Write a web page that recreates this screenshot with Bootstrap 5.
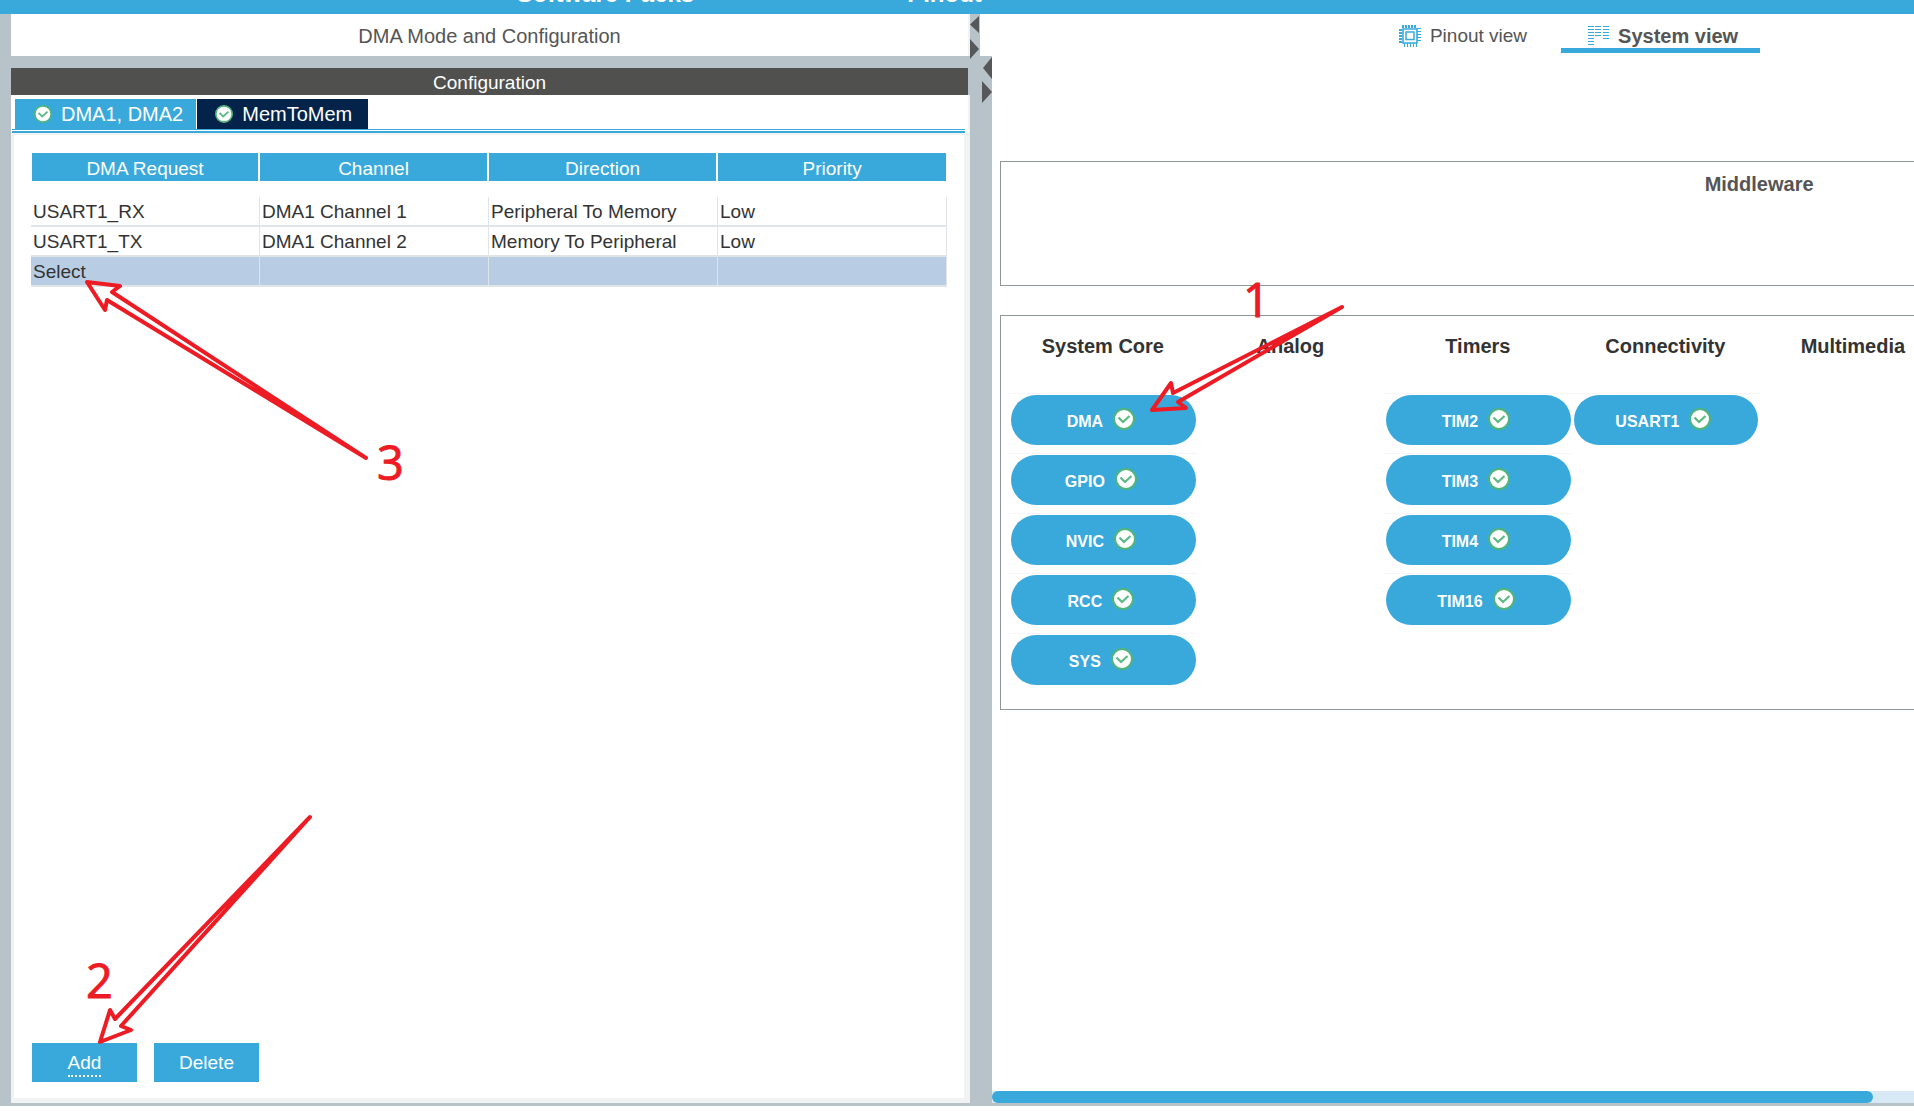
<!DOCTYPE html>
<html lang="en">
<head>
<meta charset="utf-8">
<meta name="viewport" content="width=device-width, initial-scale=1">
<title>DMA Mode and Configuration</title>
<link href="https://cdn.jsdelivr.net/npm/bootstrap@5.3.0/dist/css/bootstrap.min.css" rel="stylesheet">
<style>
  :root { --blue: #39a9dc; --frame: #b7c3c9; --navy: #03234b; --dark: #50514f; --edge: #f1f2f2; --line: #e1e4e6; }
  body { font-family: "Liberation Sans", Arial, sans-serif; font-size: 19px; line-height: 24px; color: #333; background: #fff; }
  a { color: inherit; text-decoration: none; }
  .app { height: 100vh; min-height: 800px; padding-bottom: 11px; }
  .menu-strip { height: 14px; background: var(--blue); padding: 0 0 8px 27%; gap: 213px; font-size: 24px; }
  .head-row { height: 42px; background: var(--frame); padding-left: 11px; }
  .left-side { flex: 0 0 50.4%; min-width: 0; }
  .mode-title { border-right: 2px solid var(--edge); color: #555; font-size: 20px; line-height: 44px; }
  .grip-a { flex: 0 0 10px; }
  .grip-b { flex: 0 0 22px; }
  .grip-a svg, .grip-b svg { display: block; overflow: visible; fill: #555759; margin-left: auto; }
  .grip-a, .grip-b { position: relative; z-index: 1; }
  .views { padding-left: 238px; gap: 12px; color: #555; }
  .view-tab { height: 39px; padding: 9px 22px 0 27px; gap: 9px; border-bottom: 5px solid transparent; }
  .view-tab.on { border-color: var(--blue); font-weight: 700; font-size: 20px; }
  .main-row { background: var(--frame); padding: 0 0 3px 11px; }
  .config { margin-top: 12px; }
  .config-bar { background: var(--dark); color: #fff; height: 27px; line-height: 29px; margin-right: 2px; }
  .tab-strip { background: #fff; padding: 4px 0 0 4px; gap: 1px; border-right: 2px solid var(--edge); }
  .cfg-tab { border: 0; height: 30px; color: #fff; background: var(--blue); font-size: 20px; gap: 9px; padding: 0 13px 0 19px; }
  .cfg-tab.alt { background: var(--navy); padding: 0 16px 0 18px; }
  .rules { background: #fff; padding: 0 4px 0 1px; border-right: 1px solid var(--edge); }
  .rules div { height: 4px; border-top: 1px solid var(--blue); border-bottom: 2px solid var(--blue); }
  .sheet { background: #fff; border: solid var(--edge); border-width: 2px 6px 5px 3px; padding: 18px 17px 16px; }
  .dma-grid { table-layout: fixed; width: 100%; border-collapse: separate; border-spacing: 0; }
  .dma-grid th { background: var(--blue); color: #fff; font-weight: 400; text-align: center; height: 28px; border-right: 2px solid #fff; padding: 3px 0 0; }
  .dma-grid th:first-child { border-left: 1px solid #fff; }
  .dma-grid th:last-child { border-right-width: 1px; }
  .dma-grid .spacer td { height: 16px; padding: 0; border: 0; }
  .dma-grid td { height: 30px; padding: 1px 0 0 2px; border-right: 1px solid var(--line); border-bottom: 2px solid var(--line); }
  .dma-grid .picked td { background: #b8cde4; }
  .act { border: 0; height: 39px; width: 105px; background: var(--blue); color: #fff; padding: 2px 0 0; }
  .act span { display: inline-block; line-height: 24px; border-bottom: 2px dotted transparent; }
  .act.focus-on span { border-color: #fff; }
  .actions { gap: 17px; padding-left: 1px; }
  .right-view { background: #fff; min-width: 0; width: 0; overflow: hidden; }
  .canvas { width: 1526px; padding: 105px 0 0 8px; }
  .frame-box { border: 1px solid #8f979b; }
  .mw { height: 125px; padding-top: 10px; margin-bottom: 29px; font-size: 20px; font-weight: 700; color: #555; }
  .blocks { display: grid; grid-template-columns: repeat(8, 1fr); padding: 17px 8px 22px; height: 395px; }
  .blocks h2 { font-size: 20px; line-height: 26px; font-weight: 700; text-align: center; margin: 0 0 34px; }
  .slot { border-top: 1px solid #f6f6f6; padding: 1px 1px 8px 2px; }
  .ip { border: 0; width: 100%; height: 50px; border-radius: 25px; background: var(--blue); color: #fff; font-size: 16px; font-weight: 700; gap: 10px; padding: 0 5px 0 0; }
  .ip span { padding-top: 3px; }
  .ip svg { margin-bottom: 2px; }
  .track { height: 12px; background: #d9e8f5; }
  .thumb { height: 12px; border-radius: 6px; background: var(--blue); width: 95.6%; }
  .notes { position: absolute; left: 0; top: 0; pointer-events: none; z-index: 5; fill: none; stroke: #ed1c24; stroke-width: 4px; stroke-linejoin: round; }
  .notes text { font-family: "Open Sans", "Noto Sans", sans-serif; font-size: 47px; fill: #ed1c24; stroke: #ed1c24; stroke-width: 1px; }
</style>
</head>
<body>
<svg width="0" height="0" class="position-absolute" aria-hidden="true">
  <symbol id="ok" viewBox="0 0 22 22">
    <circle cx="11" cy="11" r="10" fill="#fff" stroke="#4fb57c" stroke-width="2"/>
    <path d="M5.5 9.500 10 14 16.500 8" fill="none" stroke="#5cba87" stroke-width="2.200"/>
  </symbol>
</svg>
<div class="app d-flex flex-column position-relative overflow-hidden">
  <nav class="menu-strip d-flex align-items-end overflow-hidden text-white fw-bold flex-shrink-0">
    <a href="#packs">Software Packs</a>
    <a href="#pinout">Pinout</a>
  </nav>

  <header class="head-row d-flex flex-shrink-0">
    <div class="left-side mode-title bg-white text-center">DMA Mode and Configuration</div>
    <div class="grip-a"><svg width="10" height="46" viewBox="0 0 10 46"><path d="M9 2v17L0 10.500zM0 25v20L9 35z"/></svg></div>
    <div class="views d-flex flex-fill justify-content-center bg-white">
      <a href="#pinout-view" class="view-tab d-flex align-items-center">
        <svg width="22" height="22" viewBox="0 0 22 22" fill="none" stroke="#39a9dc"><path d="M4 0v3M7 0v3M10 0v3M13 0v3M16 0v3M0 5h3M0 8h3M0 11h3M0 14h3M0 17h3" stroke-width="2"/><path d="M5.500 18v4M8.500 18v4M11.500 18v4M14.500 18v4M17.500 18v4M18 3.500h4M18 6.500h4M18 9.500h4M18 12.500h4M18 15.500h4" stroke-width="1"/><path d="M4 4h14v14H4z" stroke-width="1.600"/><path d="M7 7h8v7.500H7z" stroke-width="1.500"/></svg>
        <span>Pinout view</span>
      </a>
      <a href="#system-view" class="view-tab on d-flex align-items-center">
        <svg width="21" height="22" viewBox="0 0 21 22" stroke="#39a9dc"><path d="M0 1.500h6M7 1.500h6M15 1.500h6M0 4.500h6M7 4.500h6M15 4.500h6M0 7.500h6M7 7.500h6M15 7.500h6M0 10.500h6M7 10.500h6M15 10.500h6M0 13.500h6M15 13.500h6M0 16.500h6M0 19.500h6" stroke-width="1"/></svg>
        <span>System view</span>
      </a>
    </div>
  </header>

  <main class="main-row d-flex flex-fill">
    <section class="left-side d-flex flex-column">
      <div class="config d-flex flex-column flex-fill">
        <div class="config-bar text-center">Configuration</div>
        <div class="tab-strip d-flex">
          <button type="button" class="cfg-tab d-flex align-items-center"><svg width="18" height="18"><use href="#ok"/></svg>DMA1, DMA2</button>
          <button type="button" class="cfg-tab alt d-flex align-items-center"><svg width="18" height="18"><use href="#ok"/></svg>MemToMem</button>
        </div>
        <div class="rules"><div></div></div>
        <div class="sheet d-flex flex-column justify-content-between flex-fill">
          <table class="dma-grid">
            <thead><tr><th>DMA Request</th><th>Channel</th><th>Direction</th><th>Priority</th></tr></thead>
            <tbody>
              <tr class="spacer"><td colspan="4"></td></tr>
              <tr><td>USART1_RX</td><td>DMA1 Channel 1</td><td>Peripheral To Memory</td><td>Low</td></tr>
              <tr><td>USART1_TX</td><td>DMA1 Channel 2</td><td>Memory To Peripheral</td><td>Low</td></tr>
              <tr class="picked"><td>Select</td><td></td><td></td><td></td></tr>
            </tbody>
          </table>
          <div class="actions d-flex">
            <button type="button" class="act focus-on"><span>Add</span></button>
            <button type="button" class="act"><span>Delete</span></button>
          </div>
        </div>
      </div>
    </section>
    <div class="grip-b"><svg width="10" height="48" viewBox="0 0 10 48"><path d="M10 1v22L1 12zM0 25v22L10 36z"/></svg></div>
    <section class="right-view d-flex flex-column flex-fill">
      <div class="canvas flex-fill">
        <div class="frame-box mw text-center">Middleware</div>
        <div class="frame-box blocks">
          <div>
            <h2>System Core</h2>
            <div class="slot"><button type="button" class="ip d-flex align-items-center justify-content-center"><span>DMA</span><svg width="22" height="22"><use href="#ok"/></svg></button></div>
            <div class="slot"><button type="button" class="ip d-flex align-items-center justify-content-center"><span>GPIO</span><svg width="22" height="22"><use href="#ok"/></svg></button></div>
            <div class="slot"><button type="button" class="ip d-flex align-items-center justify-content-center"><span>NVIC</span><svg width="22" height="22"><use href="#ok"/></svg></button></div>
            <div class="slot"><button type="button" class="ip d-flex align-items-center justify-content-center"><span>RCC</span><svg width="22" height="22"><use href="#ok"/></svg></button></div>
            <div class="slot"><button type="button" class="ip d-flex align-items-center justify-content-center"><span>SYS</span><svg width="22" height="22"><use href="#ok"/></svg></button></div>
          </div>
          <div><h2>Analog</h2></div>
          <div>
            <h2>Timers</h2>
            <div class="slot"><button type="button" class="ip d-flex align-items-center justify-content-center"><span>TIM2</span><svg width="22" height="22"><use href="#ok"/></svg></button></div>
            <div class="slot"><button type="button" class="ip d-flex align-items-center justify-content-center"><span>TIM3</span><svg width="22" height="22"><use href="#ok"/></svg></button></div>
            <div class="slot"><button type="button" class="ip d-flex align-items-center justify-content-center"><span>TIM4</span><svg width="22" height="22"><use href="#ok"/></svg></button></div>
            <div class="slot"><button type="button" class="ip d-flex align-items-center justify-content-center"><span>TIM16</span><svg width="22" height="22"><use href="#ok"/></svg></button></div>
          </div>
          <div>
            <h2>Connectivity</h2>
            <div class="slot"><button type="button" class="ip d-flex align-items-center justify-content-center"><span>USART1</span><svg width="22" height="22"><use href="#ok"/></svg></button></div>
          </div>
          <div><h2>Multimedia</h2></div>
        </div>
      </div>
      <div class="track"><div class="thumb"></div></div>
    </section>
  </main>

  <!-- numbered steps drawn over the window -->
  <svg class="notes" width="1914" height="1117" viewBox="0 0 1914 1117">
    <path d="M1342 307 1173 393 1171 383 1152 410 1186 408 1178 402z"/>
    <path d="M366 458 112 292 120 286 87 282 105 310 107 300z"/>
    <path d="M310 817 115 1019 110 1010 100 1042 131 1030 121 1026z"/>
    <text x="1243" y="317">1</text>
    <text x="86" y="998">2</text>
    <text x="377" y="480">3</text>
  </svg>
</div>
<script src="https://cdn.jsdelivr.net/npm/bootstrap@5.3.0/dist/js/bootstrap.bundle.min.js"></script>
</body>
</html>
